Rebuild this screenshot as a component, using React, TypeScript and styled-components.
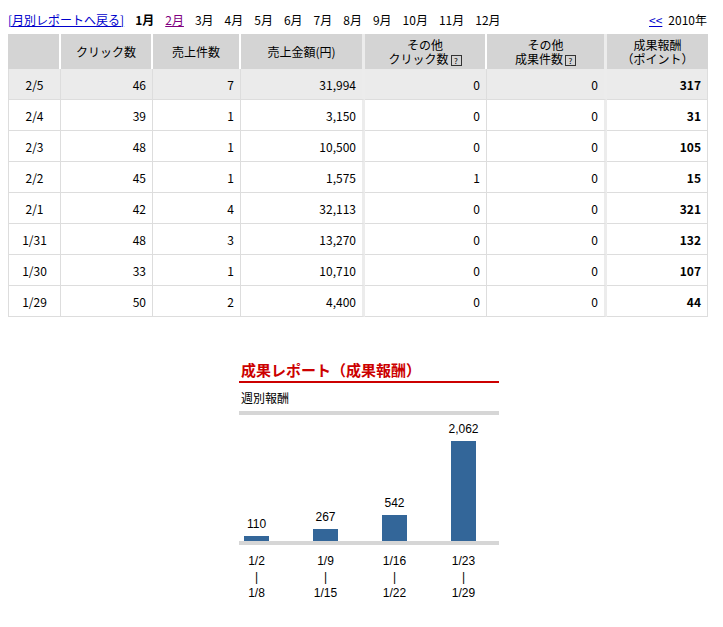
import React from "react";
import styled, { createGlobalStyle } from "styled-components";

const G = createGlobalStyle`
  body { margin: 0; background: #fff; font-family: "Noto Sans CJK JP", "Liberation Sans", sans-serif; font-size: 12px; color: #000; }
`;
const Page = styled.div` padding: 8px 16px 0 8px; width: 699px; `;
const Nav = styled.div` display: flex; align-items: center; height: 22px; gap: 11px; font-size: 12px; `;
const A = styled.a<{ $v?: boolean }>` color: ${p => (p.$v ? "#800080" : "#00c")}; text-decoration: underline; `;
const Month = styled.span<{ $b?: boolean }>` font-weight: ${p => (p.$b ? "bold" : "normal")}; `;
const Year = styled.div` margin-left: auto; display: flex; gap: 6px; `;
const Table = styled.table` width: 700px; border-collapse: separate; border-spacing: 0; margin-top: 4px; font-size: 12px; `;
const Th = styled.th<{ $sep?: boolean }>`
  background: #d4d4d4; font-weight: normal; height: 34px; line-height: 14px; padding: 1px 2px 0;
  border-right: ${p => (p.$sep ? "3px solid #ececec" : "2px solid #fff")};
  &:last-child { border-right: 0; }
`;
const Td = styled.td<{ $sep?: boolean; $bg?: boolean; $b?: boolean; $c?: boolean }>`
  background: ${p => (p.$bg ? "#ebebeb" : "#fff")}; height: 30px; padding: 0 6px; text-align: ${p => (p.$c ? "center" : "right")};
  font-weight: ${p => (p.$b ? "bold" : "normal")};
  border-right: ${p => (p.$sep ? "3px solid #ececec" : "1px solid #ddd")};
  border-bottom: 1px solid #ddd;
  &:first-child { border-left: 1px solid #ddd; }
  &:last-child { border-right: 1px solid #ddd; }
`;
const Q = styled.span` display: inline-block; width: 9px; height: 9px; border: 1px solid #333; font-size: 8px; line-height: 9px; text-align: center; margin-left: 2px; vertical-align: 0; `;
const Chart = styled.div` width: 260px; margin: 42px 0 0 231px; `;
const Title = styled.div` color: #c00; font-weight: bold; font-size: 15px; height: 22px; padding-left: 2px; border-bottom: 2px solid #c00; `;
const Sub = styled.div` font-size: 12px; padding: 6px 2px 0; height: 22px; border-bottom: 4px solid #d6d6d6; `;
const Bars = styled.div` display: flex; align-items: flex-end; height: 126px; border-bottom: 4px solid #d6d6d6; padding-left: 5px; gap: 44px; `;
const Col = styled.div` width: 25px; display: flex; flex-direction: column; align-items: center; `;
const Val = styled.div` font-family: "Liberation Sans", sans-serif; font-size: 12px; margin-bottom: 5px; white-space: nowrap; `;
const Bar = styled.div` width: 25px; background: #336699; `;
const Dates = styled.div` display: flex; padding-left: 5px; gap: 44px; margin-top: 8px; `;
const DCol = styled.div` width: 25px; display: flex; flex-direction: column; align-items: center; font-family: "Liberation Sans", sans-serif; font-size: 12px; line-height: 16px; white-space: nowrap; `;

const rows = [
  ["2/5", "46", "7", "31,994", "0", "0", "317"],
  ["2/4", "39", "1", "3,150", "0", "0", "31"],
  ["2/3", "48", "1", "10,500", "0", "0", "105"],
  ["2/2", "45", "1", "1,575", "1", "0", "15"],
  ["2/1", "42", "4", "32,113", "0", "0", "321"],
  ["1/31", "48", "3", "13,270", "0", "0", "132"],
  ["1/30", "33", "1", "10,710", "0", "0", "107"],
  ["1/29", "50", "2", "4,400", "0", "0", "44"],
];
const widths = [53, 92, 88, 124, 122, 120, 101];
const bars = [["110", 5, "1/2", "1/8"], ["267", 12, "1/9", "1/15"], ["542", 26, "1/16", "1/22"], ["2,062", 100, "1/23", "1/29"]] as const;

export default function App() {
  return (
    <Page>
      <G />
      <Nav>
        <A href="#">[月別レポートへ戻る]</A>
        <Month $b>1月</Month>
        <A href="#" $v>2月</A>
        {["3月", "4月", "5月", "6月", "7月", "8月", "9月", "10月", "11月", "12月"].map(m => <Month key={m}>{m}</Month>)}
        <Year><A href="#">&lt;&lt;</A><span>2010年</span></Year>
      </Nav>
      <Table>
        <colgroup>{widths.map((w, i) => <col key={i} style={{ width: w }} />)}</colgroup>
        <thead>
          <tr>
            <Th></Th><Th>クリック数</Th><Th>売上件数</Th><Th $sep>売上金額(円)</Th>
            <Th>その他<br />クリック数<Q>?</Q></Th><Th $sep>その他<br />成果件数<Q>?</Q></Th><Th>成果報酬<br />（ポイント）</Th>
          </tr>
        </thead>
        <tbody>
          {rows.map((r, i) => (
            <tr key={i}>
              {r.map((c, j) => <Td key={j} $bg={i === 0} $c={j === 0} $b={j === 6} $sep={j === 3 || j === 5}>{c}</Td>)}
            </tr>
          ))}
        </tbody>
      </Table>
      <Chart>
        <Title>成果レポート（成果報酬）</Title>
        <Sub>週別報酬</Sub>
        <Bars>
          {bars.map(b => <Col key={b[0]}><Val>{b[0]}</Val><Bar style={{ height: b[1] }} /></Col>)}
        </Bars>
        <Dates>
          {bars.map(b => <DCol key={b[2]}><span>{b[2]}</span><span>|</span><span>{b[3]}</span></DCol>)}
        </Dates>
      </Chart>
    </Page>
  );
}
